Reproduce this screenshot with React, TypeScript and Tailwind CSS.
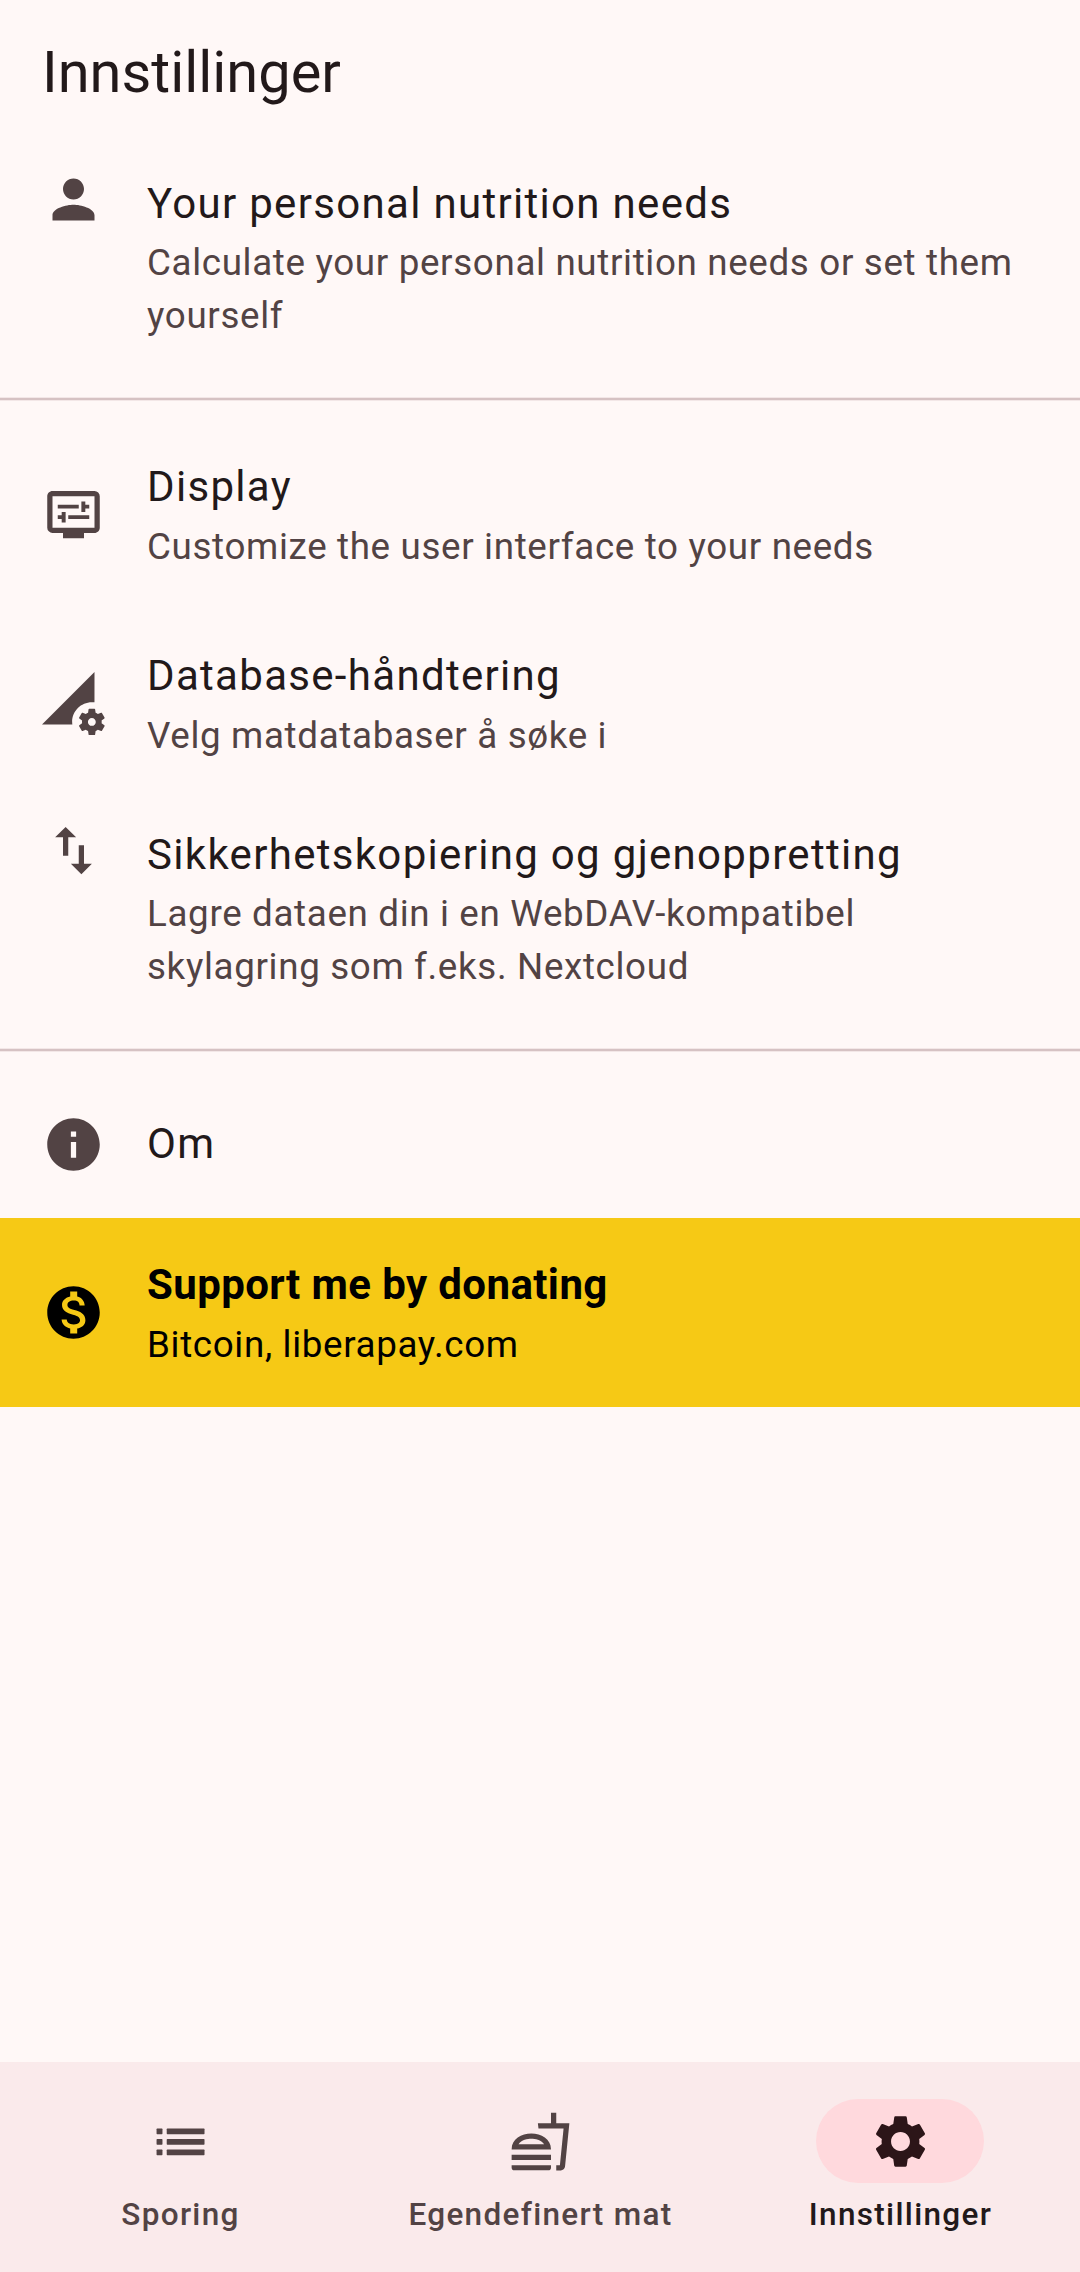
import type { ReactNode } from "react";
import {
  MdDisplaySettings,
  MdImportExport,
  MdInfo,
  MdMonetizationOn,
  MdOutlineFastfood,
  MdPermDataSetting,
  MdPerson,
  MdSettings,
} from "react-icons/md";

const ICON = "h-[63px] w-[63px] shrink-0";

function ListIcon() {
  return (
    <svg viewBox="0 0 24 24" fill="currentColor" className={ICON}>
      {[7, 11, 15].map((y) => (
        <g key={y}>
          <rect x="2.88" y={y + 0.05} width="2.25" height="2.15" rx="0.25" />
          <rect x="6.75" y={y + 0.05} width="14.4" height="2.15" rx="0.25" />
        </g>
      ))}
    </svg>
  );
}

type RowProps = {
  icon: ReactNode;
  title: string;
  lines?: string[];
  highlight?: boolean;
};

function Row({ icon, title, lines = [], highlight = false }: RowProps) {
  const layout =
    lines.length > 1
      ? "h-[231px] items-start pt-[21px]"
      : lines.length === 1
        ? "h-[189px] items-center"
        : "h-[147px] items-center";
  const textOffset = lines.length > 1 ? "mt-1" : lines.length === 1 ? "mt-[-1px]" : "mt-[-2px]";
  return (
    <li
      className={`flex shrink-0 gap-[42px] px-[42px] ${layout} ${
        highlight ? "bg-[#f6c915] text-black" : "text-[#22191a]"
      }`}
    >
      <span className={highlight ? "text-black" : "text-[#524344]"}>{icon}</span>
      <div className={`whitespace-nowrap ${textOffset}`}>
        <h2
          className={`text-[42px] leading-[63px] ${
            highlight ? "font-bold tracking-[0.39px]" : "tracking-[1.3125px]"
          }`}
        >
          {title}
        </h2>
        {lines.length > 0 && (
          <p
            className={`text-[36.75px] leading-[53px] tracking-[0.65625px] ${
              lines.length > 1 ? "mt-px" : "mt-[2px]"
            } ${highlight ? "text-black" : "text-[#524344]"}`}
          >
            {lines.map((line) => (
              <span key={line} className="block">
                {line}
              </span>
            ))}
          </p>
        )}
      </div>
    </li>
  );
}

function Divider() {
  return (
    <li className="flex h-[42px] shrink-0 items-center">
      <hr className="h-[4px] w-full border-0 border-y border-[#f3e7e7] bg-[#d6c2c3]" />
    </li>
  );
}

type TabProps = { icon: ReactNode; label: string; active?: boolean };

function Tab({ icon, label, active = false }: TabProps) {
  return (
    <button
      className={`flex flex-1 flex-col items-center pt-[37px] ${active ? "text-[#22191a]" : "text-[#524344]"}`}
    >
      <span
        className={`flex h-[84px] w-[168px] items-center justify-center rounded-full ${
          active ? "bg-[#ffd9dd] text-[#2c1518]" : ""
        }`}
      >
        {icon}
      </span>
      <span className="mt-[11px] pl-px text-[31.5px] leading-[42px] font-medium tracking-[1.3125px]">
        {label}
      </span>
    </button>
  );
}

export default function App() {
  return (
    <div className="flex h-[2272px] w-[1080px] flex-col bg-[#fff8f7] font-[Roboto,sans-serif]">
      <header className="h-[147px] shrink-0 px-[42px] pt-[36px]">
        <h1 className="text-[57.75px] leading-[73.5px] text-[#22191a]">Innstillinger</h1>
      </header>
      <ul className="flex flex-1 flex-col">
        <Row
          icon={<MdPerson className={ICON} />}
          title="Your personal nutrition needs"
          lines={["Calculate your personal nutrition needs or set them", "yourself"]}
        />
        <Divider />
        <Row
          icon={<MdDisplaySettings className={ICON} />}
          title="Display"
          lines={["Customize the user interface to your needs"]}
        />
        <Row
          icon={<MdPermDataSetting className={ICON} />}
          title="Database-håndtering"
          lines={["Velg matdatabaser å søke i"]}
        />
        <Row
          icon={<MdImportExport className={ICON} />}
          title="Sikkerhetskopiering og gjenoppretting"
          lines={["Lagre dataen din i en WebDAV-kompatibel", "skylagring som f.eks. Nextcloud"]}
        />
        <Divider />
        <Row icon={<MdInfo className={ICON} />} title="Om" />
        <Row
          icon={<MdMonetizationOn className={ICON} />}
          title="Support me by donating"
          lines={["Bitcoin, liberapay.com"]}
          highlight
        />
      </ul>
      <nav className="flex h-[210px] shrink-0 bg-[#faeaeb]">
        <Tab icon={<ListIcon />} label="Sporing" />
        <Tab icon={<MdOutlineFastfood className={ICON} />} label="Egendefinert mat" />
        <Tab icon={<MdSettings className={ICON} />} label="Innstillinger" active />
      </nav>
    </div>
  );
}
